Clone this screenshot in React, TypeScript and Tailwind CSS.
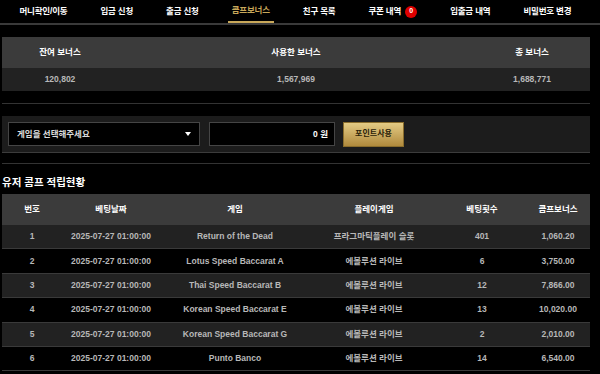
import React from "react";

const KR = '"Liberation Sans", "Noto Sans CJK KR", sans-serif';

const navItems = ["머니확인/이동", "입금 신청", "출금 신청", "콤프보너스", "친구 목록", "쿠폰 내역", "입출금 내역", "비밀번호 변경"];

const rows = [
  ["1", "2025-07-27 01:00:00", "Return of the Dead", "프라그마틱플레이 슬롯", "401", "1,060.20"],
  ["2", "2025-07-27 01:00:00", "Lotus Speed Baccarat A", "에볼루션 라이브", "6", "3,750.00"],
  ["3", "2025-07-27 01:00:00", "Thai Speed Baccarat B", "에볼루션 라이브", "12", "7,866.00"],
  ["4", "2025-07-27 01:00:00", "Korean Speed Baccarat E", "에볼루션 라이브", "13", "10,020.00"],
  ["5", "2025-07-27 01:00:00", "Korean Speed Baccarat G", "에볼루션 라이브", "2", "2,010.00"],
  ["6", "2025-07-27 01:00:00", "Punto Banco", "에볼루션 라이브", "14", "6,540.00"],
];

const cols = "grid grid-cols-[60px_98px_150px_128px_88px_64px]";

export default function App() {
  return (
    <div className="w-[600px] h-[374px] bg-black overflow-hidden text-white" style={{ fontFamily: KR }}>
      {/* nav */}
      <div className="flex h-[25px] border-b-2 border-[#3a3a3a] pl-[3px]">
        {navItems.map((t, i) => (
          <div key={t} className="px-[16.5px] flex items-stretch">
            <div
              className={
                "flex items-center h-full -mx-[4px] px-[4px] text-[8.5px] font-bold tracking-[-0.2px] " +
                (i === 3 ? "text-[#c8a85a] border-b-2 border-[#c8a85a] mb-[-2px]" : "text-white")
              }
            >
              {t}
              {i === 5 && (
                <span className="ml-[4px] w-[12px] h-[12px] rounded-full bg-[#e00000] flex items-center justify-center text-[7px] font-bold text-white">
                  0
                </span>
              )}
            </div>
          </div>
        ))}
      </div>

      <div className="ml-[2px] w-[588px]">
        {/* summary */}
        <div className="mt-[12px]">
          <div className="grid grid-cols-[116px_356px_116px] h-[31px] bg-[#3b3b3b] items-center text-center text-[8.5px] font-bold text-white">
            <div>잔여 보너스</div>
            <div>사용한 보너스</div>
            <div>총 보너스</div>
          </div>
          <div className="grid grid-cols-[116px_356px_116px] h-[23px] bg-[#222222] items-center text-center text-[8.5px] font-bold text-[#b8b8b8]">
            <div>120,802</div>
            <div>1,567,969</div>
            <div>1,688,771</div>
          </div>
        </div>

        <div className="mt-[12px] h-px bg-[#333333]" />

        {/* form panel */}
        <div className="mt-[12px] h-[37px] bg-[#1c1c1c] border-b border-[#3c3c3c] flex items-center pl-[6px]">
          <div className="w-[192px] h-[24px] bg-black border border-[#454545] flex items-center justify-between pl-[8px] pr-[8px]">
            <span className="text-[8.5px] font-bold text-[#dddddd]">게임을 선택해주세요</span>
            <svg width="6" height="4" viewBox="0 0 6 4">
              <polygon points="0,0 6,0 3,4" fill="#ffffff" />
            </svg>
          </div>
          <div className="ml-[9px] w-[126px] h-[24px] bg-black border border-[#454545] flex items-center justify-end pr-[6px]">
            <span className="text-[8.5px] font-bold text-white">0 원</span>
          </div>
          <button className="ml-[8px] w-[61px] h-[25px] border border-[#8a6d2c] bg-gradient-to-b from-[#e4cb84] to-[#b08a3c] flex items-center justify-center text-[8px] font-bold text-[#2a2208]">
            포인트사용
          </button>
        </div>

        <div className="mt-[10px] h-px bg-[#333333]" />

        <div className="mt-[11px] text-[10.5px] font-bold text-white leading-[14px]">유저 콤프 적립현황</div>

        {/* table */}
        <div className="mt-[5px]">
          <div className={cols + " h-[31px] bg-[#3b3b3b] items-center text-center text-[8.5px] font-bold text-white"}>
            <div>번호</div>
            <div>베팅날짜</div>
            <div>게임</div>
            <div>플레이게임</div>
            <div>베팅횟수</div>
            <div>콤프보너스</div>
          </div>
          {rows.map((r, i) => (
            <div
              key={r[0]}
              className={
                cols +
                " h-[24.4px] border-b border-[#3a3a3a] items-center text-center text-[8.5px] font-bold text-[#b8b8b8] " +
                (i % 2 === 0 ? "bg-[#222222]" : "bg-black")
              }
            >
              {r.map((c, j) => (
                <div key={j} className="whitespace-nowrap">{c}</div>
              ))}
            </div>
          ))}
        </div>
      </div>
    </div>
  );
}
